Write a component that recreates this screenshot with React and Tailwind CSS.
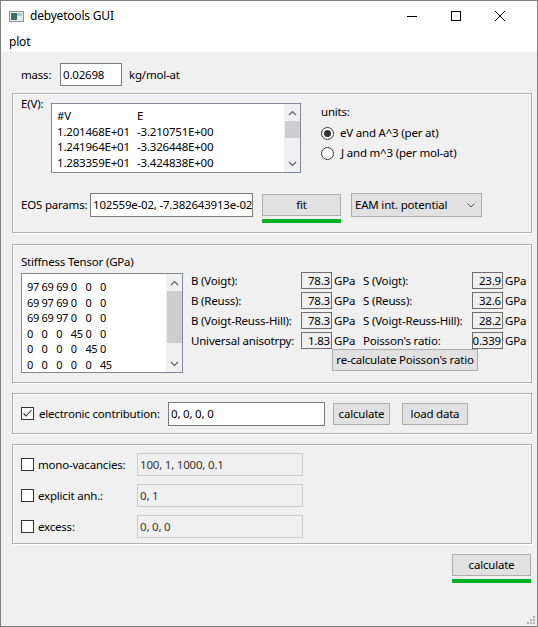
import React from 'react';

const Up = () => (
    <svg width="9" height="6" viewBox="0 0 9 6"><polyline points="1,5 4.5,1.5 8,5" fill="none" stroke="#606060" strokeWidth="1.2" /></svg>
);
const Down = () => (
    <svg width="9" height="6" viewBox="0 0 9 6"><polyline points="1,1 4.5,4.5 8,1" fill="none" stroke="#606060" strokeWidth="1.2" /></svg>
);

const Button = ({ className = '', children }) => (
    <div className={`flex items-center justify-center whitespace-nowrap bg-[#e1e1e1] border border-[#adadad] ${className}`}>{children}</div>
);

const Check = ({ checked }) => (
    <div className="w-[13px] h-[13px] border border-[#333] bg-white flex items-center justify-center shrink-0">
        {checked && (
            <svg width="11" height="11" viewBox="0 0 11 11"><polyline points="1.5,5.5 4,8 9.5,2" fill="none" stroke="#333" strokeWidth="1.1" /></svg>
        )}
    </div>
);

const Radio = ({ checked }) => (
    <div className="w-[13px] h-[13px] rounded-full border border-[#333] bg-white flex items-center justify-center shrink-0">
        {checked && <div className="w-[7px] h-[7px] rounded-full bg-[#333]"></div>}
    </div>
);

const ValueBox = ({ v }) => (
    <div className="w-[31px] h-[17px] border border-[#6e6e6e] bg-[#f0f0f0] overflow-hidden flex items-center justify-end pr-[1px] leading-none whitespace-nowrap">{v}</div>
);

const evRows = [
    ['#V', 'E'],
    ['1.201468E+01', '-3.210751E+00'],
    ['1.241964E+01', '-3.326448E+00'],
    ['1.283359E+01', '-3.424838E+00'],
];

const tensor = [
    ['97', '69', '69', '0', '0', '0'],
    ['69', '97', '69', '0', '0', '0'],
    ['69', '69', '97', '0', '0', '0'],
    ['0', '0', '0', '45', '0', '0'],
    ['0', '0', '0', '0', '45', '0'],
    ['0', '0', '0', '0', '0', '45'],
];

const moduli = [
    ['B (Voigt):', '78.3', 'S (Voigt):', '23.9'],
    ['B (Reuss):', '78.3', 'S (Reuss):', '32.6'],
    ['B (Voigt-Reuss-Hill):', '78.3', 'S (Voigt-Reuss-Hill):', '28.2'],
    ['Universal anisotrpy:', '1.83', "Poisson's ratio:", '0.339'],
];

const extras = [
    ['mono-vacancies:', '100, 1, 1000, 0.1'],
    ['explicit anh.:', '0, 1'],
    ['excess:', '0, 0, 0'],
];

const box = 'w-[520px] border border-[#b0b0b0] shadow-[1px_1px_0_#ffffff,inset_1px_1px_0_#ffffff]';

const App = () => {
    return (
        <div className="w-[538px] h-[627px] border border-[#808080] bg-[#f0f0f0] text-[11.5px] tracking-[-0.2px] text-black font-['Noto_Sans',sans-serif] flex flex-col overflow-hidden">
            {/* title bar */}
            <div className="h-[30px] bg-white flex items-center shrink-0">
                <svg className="ml-[8px]" width="15" height="11" viewBox="0 0 15 11">
                    <rect x="0.5" y="0.5" width="14" height="10" fill="#e8ecec" stroke="#8d9393" />
                    <rect x="2" y="2" width="6" height="7" fill="#3d6b6b" />
                    <rect x="8" y="2" width="5" height="3" fill="#b9c6c6" />
                </svg>
                <span className="ml-[6px] text-[12px] leading-none">debyetools GUI</span>
                <div className="ml-auto flex items-center">
                    <svg className="mr-[34px]" width="10" height="10" viewBox="0 0 10 10"><line x1="0" y1="5.5" x2="10" y2="5.5" stroke="#000" /></svg>
                    <svg className="mr-[34px]" width="10" height="10" viewBox="0 0 10 10"><rect x="0.5" y="0.5" width="9" height="9" fill="none" stroke="#000" /></svg>
                    <svg className="mr-[32px]" width="10" height="10" viewBox="0 0 10 10"><path d="M0 0 L10 10 M10 0 L0 10" stroke="#000" /></svg>
                </div>
            </div>
            {/* menu bar */}
            <div className="h-[21px] bg-white flex items-center pl-[8px] shrink-0 text-[12px]">plot</div>

            <div className="flex flex-col pl-[11px] pr-[5px]">
                {/* mass */}
                <div className="mt-[11px] h-[23px] flex items-center pl-[9px]">
                    <span className="w-[39px]">mass:</span>
                    <div className="w-[62px] h-[23px] border border-[#7a7a7a] bg-white flex items-center pl-[2px]">0.02698</div>
                    <span className="ml-[7px]">kg/mol-at</span>
                </div>

                {/* E(V) */}
                <div className={`${box} mt-[7px] h-[140px] pl-[8px] pt-[2px]`}>
                    <div className="flex items-start">
                        <span className="w-[30px] leading-[16px]">E(V):</span>
                        <div className="mt-[7px] w-[250px] h-[70px] border border-[#828790] bg-white flex">
                            <div className="flex-1 pl-[5px] pt-[4px] leading-[15.5px]">
                                {evRows.map((r, i) => (
                                    <div key={i} className="flex whitespace-nowrap">
                                        <span className="w-[80px]">{r[0]}</span>
                                        <span>{r[1]}</span>
                                    </div>
                                ))}
                            </div>
                            <div className="w-[16px] bg-[#f0f0f0] flex flex-col items-center">
                                <div className="h-[17px] flex items-center"><Up /></div>
                                <div className="w-[15px] h-[17px] bg-[#cdcdcd]"></div>
                                <div className="mt-auto h-[17px] flex items-center"><Down /></div>
                            </div>
                        </div>
                        <div className="ml-[20px] mt-[8px] flex flex-col">
                            <span className="leading-[16px]">units:</span>
                            <div className="mt-[3px] h-[20px] flex items-center"><Radio checked /><span className="ml-[6px]">eV and A^3 (per at)</span></div>
                            <div className="h-[20px] flex items-center"><Radio /><span className="ml-[7px]">J and m^3 (per mol-at)</span></div>
                        </div>
                    </div>
                    <div className="mt-[20px] flex items-start">
                        <span className="w-[69px] leading-[24px] whitespace-nowrap">EOS params:</span>
                        <div className="w-[163px] h-[24px] border border-[#7a7a7a] bg-white flex items-center pl-[2px] overflow-hidden whitespace-nowrap">102559e-02, -7.382643913e-02</div>
                        <div className="ml-[9px] mt-[1px] flex flex-col">
                            <Button className="w-[79px] h-[22px]">fit</Button>
                            <div className="mt-[3px] w-[79px] h-[4px] bg-[#06b025]"></div>
                        </div>
                        <div className="ml-[10px] w-[131px] h-[24px] border border-[#adadad] bg-[#e1e1e1] flex items-center pl-[3px]">
                            <span>EAM int. potential</span>
                            <svg className="ml-auto mr-[6px]" width="8" height="5" viewBox="0 0 8 5"><polyline points="0.5,0.5 4,4 7.5,0.5" fill="none" stroke="#555" /></svg>
                        </div>
                    </div>
                </div>

                {/* stiffness */}
                <div className={`${box} mt-[11px] h-[139px] pl-[8px] pt-[9px]`}>
                    <div className="leading-[16px]">Stiffness Tensor (GPa)</div>
                    <div className="mt-[3px] flex items-start">
                        <div className="w-[162px] h-[100px] border border-[#828790] bg-white flex">
                            <div className="flex-1 pl-[5px] pt-[5px] leading-[15.6px] text-[11px] tracking-[-0.4px]">
                                {tensor.map((r, i) => (
                                    <div key={i} className="flex">
                                        {r.map((c, j) => (
                                            <span key={j} className="w-[14.6px] shrink-0">{c}</span>
                                        ))}
                                    </div>
                                ))}
                            </div>
                            <div className="w-[16px] bg-[#f0f0f0] flex flex-col items-center">
                                <div className="h-[17px] flex items-center"><Up /></div>
                                <div className="w-[15px] h-[52px] bg-[#cdcdcd]"></div>
                                <div className="mt-auto h-[17px] flex items-center"><Down /></div>
                            </div>
                        </div>
                        <div className="ml-[8px] -mt-[1px] flex flex-col">
                            <div className="flex flex-col gap-[3px]">
                                {moduli.map((m, i) => (
                                    <div key={i} className="h-[17px] flex items-center whitespace-nowrap">
                                        <span className="w-[110px]">{m[0]}</span>
                                        <ValueBox v={m[1]} />
                                        <span className="ml-[2px] w-[29px]">GPa</span>
                                        <span className="w-[109px]">{m[2]}</span>
                                        <ValueBox v={m[3]} />
                                        <span className="ml-[2px]">GPa</span>
                                    </div>
                                ))}
                            </div>
                            <Button className="ml-[141px] w-[146px] h-[22px]">re-calculate Poisson's ratio</Button>
                        </div>
                    </div>
                </div>

                {/* electronic */}
                <div className={`${box} mt-[10px] h-[41px] pl-[8px] flex items-center`}>
                    <Check checked />
                    <span className="ml-[5px] w-[129px] whitespace-nowrap">electronic contribution:</span>
                    <div className="w-[157px] h-[24px] border border-[#7a7a7a] bg-white flex items-center pl-[2px]">0, 0, 0, 0</div>
                    <Button className="ml-[8px] w-[57px] h-[22px]">calculate</Button>
                    <Button className="ml-[12px] w-[66px] h-[22px]">load data</Button>
                </div>

                {/* extras */}
                <div className={`${box} mt-[10px] h-[100px] pl-[8px] pt-[8px] flex flex-col gap-[8px]`}>
                    {extras.map((e, i) => (
                        <div key={i} className="h-[23px] flex items-center">
                            <Check />
                            <span className="ml-[4px] w-[99px] whitespace-nowrap">{e[0]}</span>
                            <div className="w-[166px] h-[23px] border border-[#cccccc] bg-[#f0f0f0] flex items-center pl-[2px] text-[#333]">{e[1]}</div>
                        </div>
                    ))}
                </div>

                {/* bottom */}
                <div className="mt-[10px] self-end mr-[1px] flex flex-col">
                    <Button className="w-[79px] h-[22px]">calculate</Button>
                    <div className="mt-[3px] w-[79px] h-[4px] bg-[#06b025]"></div>
                </div>
            </div>

            <div className="mt-auto self-end mr-[2px] mb-[2px]">
                <svg width="8" height="8" viewBox="0 0 8 8" fill="#b0b0b0">
                    <rect x="6" y="0" width="2" height="2" />
                    <rect x="3" y="3" width="2" height="2" />
                    <rect x="6" y="3" width="2" height="2" />
                    <rect x="0" y="6" width="2" height="2" />
                    <rect x="3" y="6" width="2" height="2" />
                    <rect x="6" y="6" width="2" height="2" />
                </svg>
            </div>
        </div>
    );
};

export default App;
